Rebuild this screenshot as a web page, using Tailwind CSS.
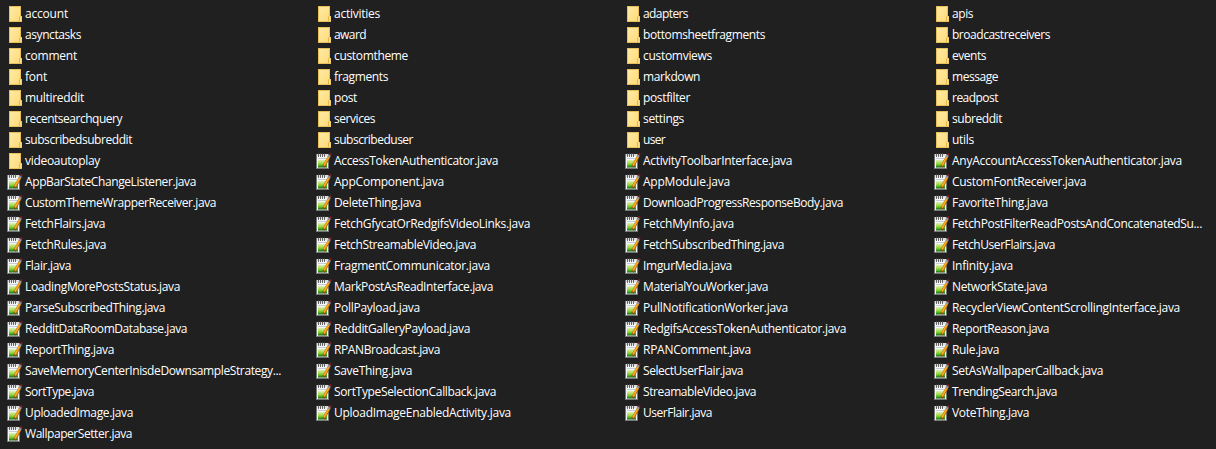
<!DOCTYPE html>
<html lang="en">
<head>
<meta charset="utf-8">
<title>Files</title>
<script src="https://cdn.jsdelivr.net/npm/@tailwindcss/browser@4"></script>
</head>
<body class="bg-[#202020] overflow-hidden">
<svg class="absolute size-0">
  <defs>
    <linearGradient id="fold" x1="0" y1="0" x2="1" y2="1"><stop offset="0" stop-color="#ffe9a2"/><stop offset="1" stop-color="#ffdc7c"/></linearGradient>
    <linearGradient id="green" x1="0" y1="0" x2="0" y2="1"><stop offset="0" stop-color="#e0efb4"/><stop offset=".45" stop-color="#a4d84a"/><stop offset=".75" stop-color="#4fb520"/><stop offset="1" stop-color="#0b5a10"/></linearGradient>
  </defs>
  <symbol id="folder" viewBox="0 0 16 16">
    <path d="M2 0h12v10h1v6H2z" fill="#e8bf58"/>
    <path d="M3 1h10v14H3z" fill="url(#fold)"/>
    <path d="M12.500 10.500h2V15h-2z" fill="#ffe08a"/>
    <path d="M12.500 15v-4.500" stroke="#e3b64c" fill="none"/>
  </symbol>
  <symbol id="note" viewBox="0 0 16 16">
    <path d="M0 1h13v15H0z" fill="#777"/>
    <path d="M1 3h11v12H1z" fill="#f4f6f8"/>
    <path d="M1 1h11v2H1z" fill="#ddd"/>
    <path d="M2 5.500h8" stroke="#c3cdd8"/>
    <path d="M2.500 0v4M4.500 0v4M6.500 0v4M8.500 0v4" stroke="#444" stroke-width=".8"/>
    <path d="M2 7h9v7.500H2z" fill="url(#green)"/>
    <path d="M7.500 13.800L13 4" stroke="#8a5010" stroke-width="2.800"/>
    <path d="M8 12.500L12.900 3.800" stroke="#f9a91c" stroke-width="2.100"/>
    <path d="M12.600 4l1.200-2" stroke="#8f969e" stroke-width="2.600"/>
    <path d="M13.900 2l.9-1.500" stroke="#981818" stroke-width="2"/>
  </symbol>
</svg>
<main id="list" class="grid grid-cols-[repeat(4,309px)] auto-rows-[21px] pt-[3px] pl-[7px] font-['Open_Sans','Noto_Sans',sans-serif] text-[12px] leading-[21px] text-white"></main>
<script>
// Each line is one grid row; every entry is name:width in pixels.
const rows = `account:43 activities:46 adapters:45 apis:21
asynctasks:56 award:32 bottomsheetfragments:122 broadcastreceivers:98
comment:52 customtheme:74 customviews:69 events:34
font:22 fragments:54 markdown:57 message:46
multireddit:59 post:23 postfilter:47 readpost:46
recentsearchquery:97 services:41 settings:41 subreddit:50
subscribedsubreddit:107 subscribeduser:79 user:22 utils:22
videoautoplay:75 AccessTokenAuthenticator.java:164 ActivityToolbarInterface.java:149 AnyAccountAccessTokenAuthenticator.java:230
AppBarStateChangeListener.java:171 AppComponent.java:110 AppModule.java:87 CustomFontReceiver.java:134
CustomThemeWrapperReceiver.java:191 DeleteThing.java:87 DownloadProgressResponseBody.java:200 FavoriteThing.java:96
FetchFlairs.java:80 FetchGfycatOrRedgifsVideoLinks.java:196 FetchMyInfo.java:91 FetchPostFilterReadPostsAndConcatenatedSu...:250
FetchRules.java:81 FetchStreamableVideo.java:142 FetchSubscribedThing.java:141 FetchUserFlairs.java:103
Flair.java:46 FragmentCommunicator.java:156 ImgurMedia.java:89 Infinity.java:61
LoadingMorePostsStatus.java:155 MarkPostAsReadInterface.java:159 MaterialYouWorker.java:125 NetworkState.java:95
ParseSubscribedThing.java:140 PollPayload.java:86 PullNotificationWorker.java:145 RecyclerViewContentScrollingInterface.java:228
RedditDataRoomDatabase.java:162 RedditGalleryPayload.java:136 RedgifsAccessTokenAuthenticator.java:203 ReportReason.java:97
ReportThing.java:89 RPANBroadcast.java:106 RPANComment.java:108 Rule.java:47
SaveMemoryCenterInisdeDownsampleStrategy...:256 SaveThing.java:78 SelectUserFlair.java:100 SetAsWallpaperCallback.java:151
SortType.java:69 SortTypeSelectionCallback.java:162 StreamableVideo.java:113 TrendingSearch.java:105
UploadedImage.java:108 UploadImageEnabledActivity.java:177 UserFlair.java:69 VoteThing.java:77
WallpaperSetter.java:107`.split(/\s+/).map(s => s.split(':'));
const list = document.getElementById('list');
list.innerHTML = rows.map(([name, width]) => `<div class="flex items-center whitespace-nowrap"><svg class="size-4 shrink-0 mr-[2px]"><use href="#${name.includes('.') ? 'note' : 'folder'}"/></svg><span data-width="${width}">${name}</span></div>`).join('');
const fit = () => list.querySelectorAll('span').forEach(s => {
  s.style.letterSpacing = '0px';
  s.style.letterSpacing = (s.dataset.width - s.getBoundingClientRect().width) / s.textContent.length + 'px';
});
fit();
document.fonts.ready.then(fit);
</script>
</body>
</html>
